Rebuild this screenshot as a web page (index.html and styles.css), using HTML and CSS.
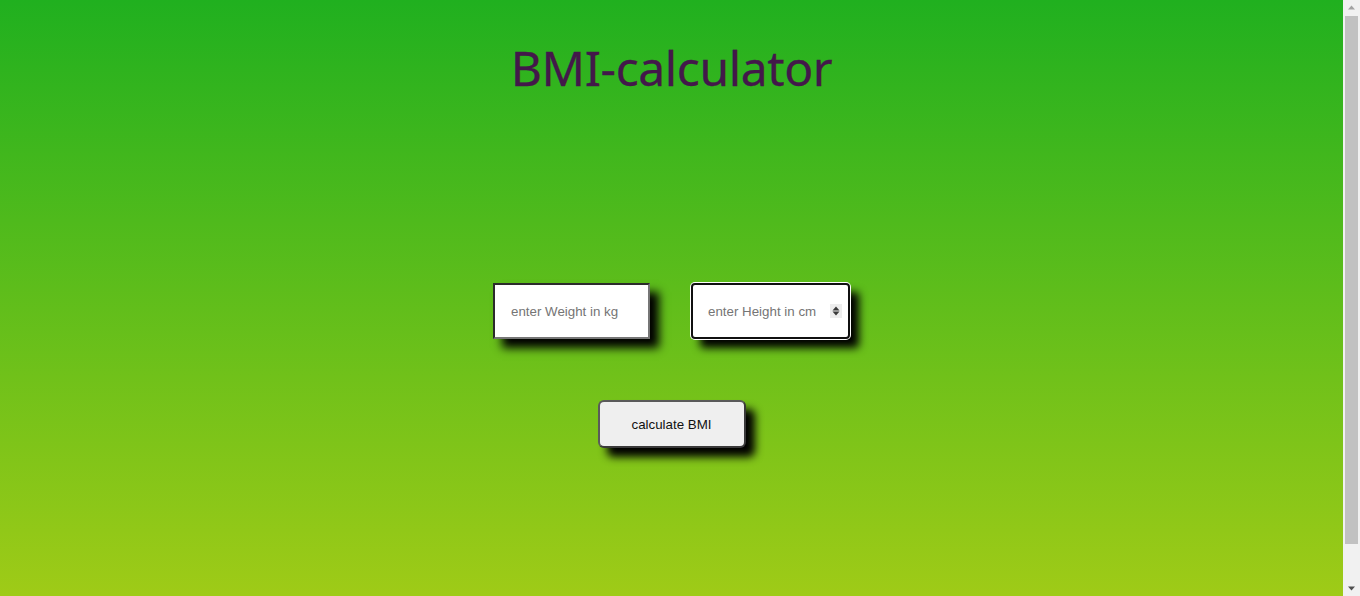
FILE: index.html
```html
<!DOCTYPE html>
<html lang="en">
<head>
<meta charset="utf-8">
<title>BMI-calculator</title>
<link rel="stylesheet" href="styles.css">
</head>
<body>
<main class="app">
  <h1 class="title">BMI-calculator</h1>
  <div class="inputs">
    <input class="field field-weight" type="text" placeholder="enter Weight in kg">
    <div class="height-wrap">
      <input class="field field-height" type="number" placeholder="enter Height in cm">
      <svg class="spinner" width="12" height="14" viewBox="0 0 12 14" aria-hidden="true">
        <rect width="12" height="14" fill="#ededed"/>
        <path d="M6 2.5 L9.5 6.5 L2.5 6.5 Z" fill="#3a3a3a"/>
        <path d="M6 11.5 L9.5 7.5 L2.5 7.5 Z" fill="#3a3a3a"/>
      </svg>
    </div>
  </div>
  <button class="calc-btn" type="button">calculate BMI</button>
</main>
<div class="scrollbar" aria-hidden="true">
  <svg class="sb-arrow" width="17" height="16" viewBox="0 0 17 16"><path d="M8.5 5.5 L12 9.5 L5 9.5 Z" fill="#a3a3a3"/></svg>
  <div class="sb-track"><div class="sb-thumb"></div></div>
  <svg class="sb-arrow" width="17" height="16" viewBox="0 0 17 16"><path d="M8.5 10.5 L12 6.5 L5 6.5 Z" fill="#505050"/></svg>
</div>
</body>
</html>
```
FILE: styles.css
```css
html {
  height: 100%;
  background: linear-gradient(to bottom, #20b01f 0%, #9fcb17 100%);
}
body {
  margin: 0;
  height: 596px;
  overflow: hidden;
  padding-right: 17px;
  font-family: "Liberation Sans", Arial, sans-serif;
}
.app {
  display: flex;
  flex-direction: column;
  align-items: center;
  padding-top: 36px;
}
.title {
  margin: 0;
  font-family: "Noto Sans", "Open Sans", sans-serif;
  font-weight: 400;
  font-size: 48px;
  line-height: 64px;
  color: #43184a;
  letter-spacing: -0.4px;
  -webkit-text-stroke: 0.3px #43184a;
}
.inputs {
  display: flex;
  gap: 41px;
  margin-top: 183px;
}
.field {
  box-sizing: border-box;
  height: 56px;
  padding: 0 16px;
  font-family: "Liberation Sans", Arial, sans-serif;
  font-size: 13.333px;
  color: #222;
  background: #fff;
  box-shadow: 9px 9px 9px #000;
}
.field::placeholder { color: #757575; }
.field-weight {
  width: 157px;
  border: 2px solid;
  border-color: #2b2b2b #767676 #767676 #2b2b2b;
}
.height-wrap {
  position: relative;
  display: flex;
}
.field-height {
  width: 159px;
  padding: 0 20px 0 15px;
  border: 2px solid #101010;
  border-radius: 4px;
  outline: none;
  box-shadow: 0 0 0 1px #fff, 9px 9px 9px #000;
  -moz-appearance: textfield;
  appearance: textfield;
}
.field-height::-webkit-inner-spin-button,
.field-height::-webkit-outer-spin-button {
  -webkit-appearance: none;
  margin: 0;
}
.spinner {
  position: absolute;
  top: 21px;
  right: 8px;
}
.calc-btn {
  box-sizing: border-box;
  width: 148px;
  height: 48px;
  margin-top: 61px;
  border: 2px solid;
  border-color: #5a5a5a #3a3a3a #3a3a3a #5a5a5a;
  border-radius: 6px;
  background: #efefef;
  font-family: "Liberation Sans", Arial, sans-serif;
  font-size: 13.333px;
  color: #111;
  box-shadow: 9px 9px 9px #000;
}
.scrollbar {
  position: fixed;
  top: 0;
  right: 0;
  width: 17px;
  height: 596px;
  background: #f1f1f1;
  display: flex;
  flex-direction: column;
}
.sb-arrow { flex: none; display: block; }
.sb-track {
  flex: 1;
  padding: 0 2px;
  display: flex;
  flex-direction: column;
}
.sb-thumb {
  height: 528px;
  background: #c1c1c1;
}
```
